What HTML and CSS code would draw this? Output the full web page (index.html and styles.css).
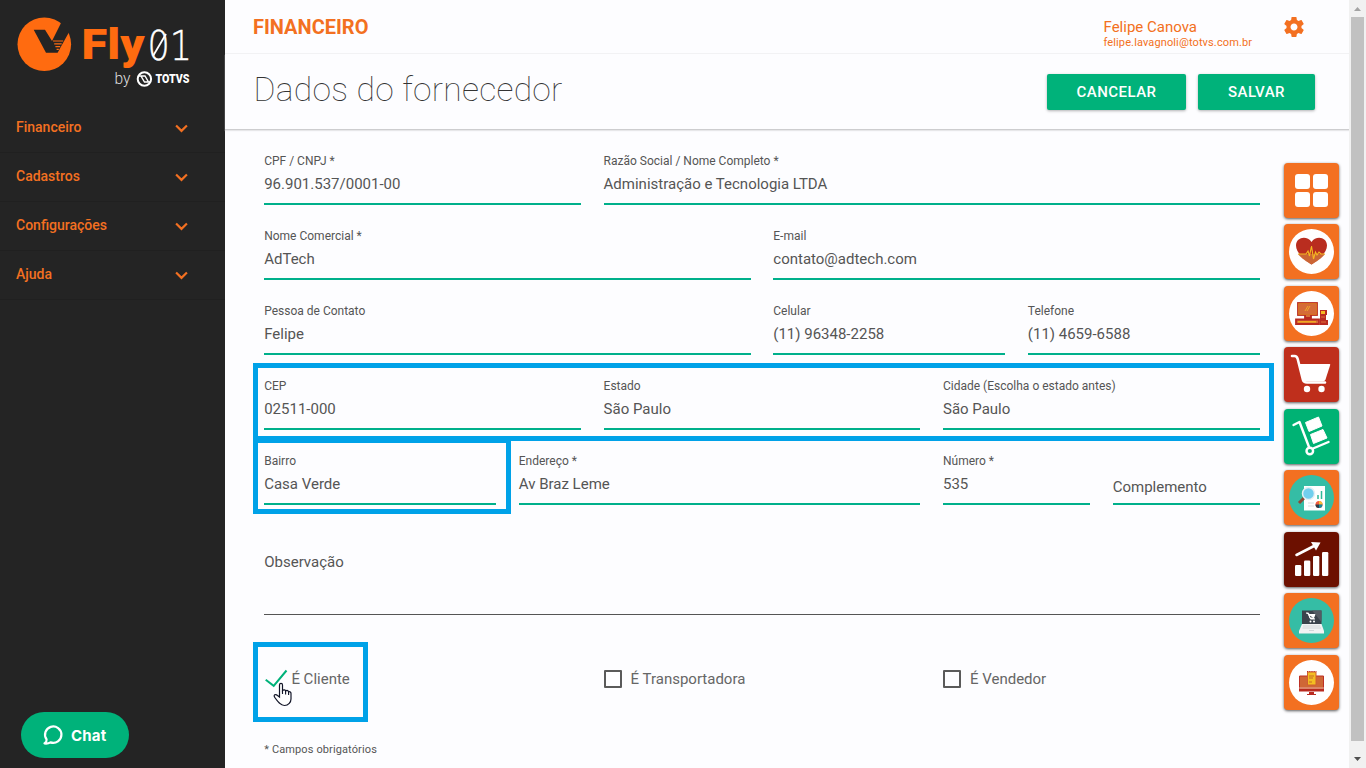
FILE: index.html
```html
<!DOCTYPE html>
<html lang="pt-BR">
<head>
<meta charset="utf-8">
<title>Fly01 - Financeiro</title>
<link rel="stylesheet" href="styles.css">
</head>
<body>
<div class="app">
  <aside class="sidebar">
    <svg class="logo" width="225" height="103" viewBox="0 0 225 103">
      <circle cx="44.3" cy="44.3" r="26.8" fill="#ff6b10"/>
      <path d="M33.700 29.700H45L52 41L63 19L73 25L57.600 52.800H46z" fill="#242424"/>
      <path d="M53 41H63.200M54.200 43.800H61.700M55.400 46.600H60.200M56.600 49.400H58.800" stroke="#ff6b10" stroke-width="1.200"/>
      <text class="logo-fly" x="81.500" y="59.300" textLength="63" lengthAdjust="spacingAndGlyphs">Fly</text>
      <text class="logo-num" x="147.500" y="59.500" textLength="44.500" lengthAdjust="spacingAndGlyphs">01</text>
      <path d="M153 56L166 34" stroke="#fff" stroke-width="1.800"/>
      <text class="logo-by" x="114.500" y="83.500" textLength="16" lengthAdjust="spacingAndGlyphs">by</text>
      <circle cx="144.400" cy="79" r="6.700" fill="none" stroke="#fff" stroke-width="2"/>
      <path d="M141 76H145L148.500 82H144.500zM138.500 76H141M148.500 82H150.500" fill="none" stroke="#fff" stroke-width="1.400"/>
      <text class="logo-totvs" x="155.500" y="83" textLength="34" lengthAdjust="spacingAndGlyphs">TOTVS</text>
    </svg>
    <nav class="menu">
      <a class="menu-item">Financeiro<svg class="chev" viewBox="0 0 12 8"><path d="M1 1.2L6 6.2L11 1.2"/></svg></a>
      <a class="menu-item">Cadastros<svg class="chev" viewBox="0 0 12 8"><path d="M1 1.2L6 6.2L11 1.2"/></svg></a>
      <a class="menu-item">Configurações<svg class="chev" viewBox="0 0 12 8"><path d="M1 1.2L6 6.2L11 1.2"/></svg></a>
      <a class="menu-item">Ajuda<svg class="chev" viewBox="0 0 12 8"><path d="M1 1.2L6 6.2L11 1.2"/></svg></a>
    </nav>
    <button class="chat"><svg width="22" height="22" viewBox="0 0 22 22"><path d="M4.600 15.500A8.200 8.200 0 1 1 8.500 18.400C6.500 19.600 4.500 19.800 2.500 19.500C4 18.400 4.800 17 4.600 15.500z" fill="none" stroke="#fff" stroke-width="2.200" stroke-linejoin="round"/></svg><span>Chat</span></button>
  </aside>

  <main class="main">
    <header class="topbar">
      <div class="module">FINANCEIRO</div>
      <div class="user"><div class="user-name">Felipe Canova</div><div class="user-mail">felipe.lavagnoli@totvs.com.br</div></div>
      <svg class="gear" width="24" height="24" viewBox="0 0 24 24"><path d="M19.430 12.980c.04-.32.070-.64.070-.98s-.03-.66-.07-.98l2.110-1.650c.19-.15.240-.42.120-.64l-2-3.460c-.12-.22-.39-.3-.61-.22l-2.490 1c-.52-.4-1.080-.73-1.690-.98l-.38-2.650C14.460 2.180 14.250 2 14 2h-4c-.25 0-.46.180-.49.420l-.38 2.650c-.61.250-1.170.590-1.690.980l-2.490-1c-.23-.09-.49 0-.61.220l-2 3.460c-.13.220-.07.490.120.640l2.110 1.650c-.04.320-.07.650-.07.980s.030.660.070.980l-2.110 1.650c-.19.150-.24.420-.12.640l2 3.460c.12.220.390.300.610.220l2.490-1c.52.400 1.080.730 1.690.980l.38 2.650c.03.240.240.420.490.420h4c.25 0 .46-.18.490-.42l.38-2.650c.61-.25 1.170-.59 1.690-.98l2.490 1c.23.090.490 0 .61-.22l2-3.460c.12-.22.070-.49-.12-.64l-2.110-1.650zM12 15.500c-1.930 0-3.500-1.570-3.500-3.500s1.570-3.500 3.500-3.500 3.500 1.570 3.500 3.500-1.570 3.500-3.500 3.500z" fill="#f37021"/></svg>
    </header>
    <div class="titlebar">
      <h1 class="title">Dados do fornecedor</h1>
      <button class="btn btn-cancel">CANCELAR</button>
      <button class="btn btn-save">SALVAR</button>
    </div>

    <div class="content">
      <form class="form">
        <div class="field s4"><label>CPF / CNPJ *</label><div class="value">96.901.537/0001-00</div></div>
        <div class="field s8"><label>Razão Social / Nome Completo *</label><div class="value">Administração e Tecnologia LTDA</div></div>
        <div class="field s6"><label>Nome Comercial *</label><div class="value">AdTech</div></div>
        <div class="field s6"><label>E-mail</label><div class="value">contato@adtech.com</div></div>
        <div class="field s6"><label>Pessoa de Contato</label><div class="value">Felipe</div></div>
        <div class="field s3"><label>Celular</label><div class="value">(11) 96348-2258</div></div>
        <div class="field s3"><label>Telefone</label><div class="value">(11) 4659-6588</div></div>
        <div class="field s4"><label>CEP</label><div class="value">02511-000</div></div>
        <div class="field s4"><label>Estado</label><div class="value">São Paulo</div></div>
        <div class="field s4"><label>Cidade (Escolha o estado antes)</label><div class="value">São Paulo</div></div>
        <div class="field s3"><label>Bairro</label><div class="value">Casa Verde</div></div>
        <div class="field s5"><label>Endereço *</label><div class="value">Av Braz Leme</div></div>
        <div class="field s2"><label>Número *</label><div class="value">535</div></div>
        <div class="field s2 empty"><div class="value">Complemento</div></div>
        <div class="field s12 notes"><div class="value">Observação</div></div>
        <div class="check s4 checked"><svg width="24" height="20" viewBox="0 0 24 20"><path d="M1.700 10.800L9.700 16.800L22.500 1.500" fill="none" stroke="#00b27a" stroke-width="2"/></svg>É Cliente</div>
        <div class="check s4"><i class="box"></i>É Transportadora</div>
        <div class="check s4"><i class="box"></i>É Vendedor</div>
        <div class="required">* Campos obrigatórios</div>
      </form>

      <div class="apps">
        <div class="app-tile"><svg viewBox="0 0 55 55"><g fill="#fff"><rect x="11" y="11" width="15" height="15" rx="3"/><rect x="29" y="11" width="15" height="15" rx="3"/><rect x="11" y="29" width="15" height="15" rx="3"/><rect x="29" y="29" width="15" height="15" rx="3"/></g></svg></div>
        <div class="app-tile"><svg viewBox="0 0 55 55"><circle cx="27.500" cy="27.500" r="22.500" fill="#fff"/><path d="M27.500 40.500C21 36 12 29 12 21.500C12 13 23 11 27.500 18C32 11 43 13 43 21.500C43 29 34 36 27.500 40.500z" fill="#b92d1f"/><path d="M14 30H41C38 34 32 38 27.500 40.500C23 38 17 34 14 30z" fill="#cb6535"/><path d="M14 30H22L24 27L25.500 32L27.500 22L29.500 35L31.500 28L33 31L35 28L37 30H41" fill="none" stroke="#f5b921" stroke-width="1.100"/></svg></div>
        <div class="app-tile"><svg viewBox="0 0 55 55"><circle cx="27.500" cy="27.500" r="22.500" fill="#fff"/><g fill="#d56b38" stroke="#b82a20" stroke-width="1.800"><rect x="14" y="17" width="19" height="12"/><path d="M21 29V32H27V29M12 33.500H35V38H12z"/></g><path d="M14 35.800H32" stroke="#f2b21f" stroke-width="1.400"/><path d="M14.500 17.500H32.500V28.500H14.500z" fill="none" stroke="#f2b21f" stroke-width=".5"/><path d="M21 25L24 20M23 25L26 20" stroke="#efa82a" stroke-width="1"/><path d="M36 24H43V29H42V34H44V39H36z" fill="#b92b20"/><path d="M37 25H41V28H37z" fill="#f5b921"/><path d="M37 31H41M37 36H42" stroke="#df713a" stroke-width="1"/></svg></div>
        <div class="app-tile red"><svg viewBox="0 0 55 55"><path d="M8 9H10.500C12.500 9 13.200 10 13.700 12L19 33C19.500 35 21 35.500 23 35.500H41" fill="none" stroke="#fff" stroke-width="2.600" stroke-linecap="round"/><path d="M15 17H45.500Q46.500 17 46.200 18L41.500 32.500Q40.800 34.500 38.500 34.500H21Q19 34.500 18.600 33z" fill="#fff"/><circle cx="23" cy="42" r="3.200" fill="#fff"/><circle cx="37.500" cy="42" r="3.200" fill="#fff"/></svg></div>
        <div class="app-tile green"><svg viewBox="0 0 55 55"><path d="M9.500 16L15.500 13L25 38M29 39.500L44.500 33" fill="none" stroke="#fff" stroke-width="2.400" stroke-linecap="round" stroke-linejoin="round"/><circle cx="25.800" cy="42" r="3.300" fill="none" stroke="#fff" stroke-width="2.400"/><path d="M21.500 13.500L34.500 8L38 17L25 22.500zM26.500 25.500L39 20.500L43 29L29.500 34.500z" fill="#fff" stroke="#fff" stroke-linejoin="round"/></svg></div>
        <div class="app-tile"><svg viewBox="0 0 55 55"><circle cx="27.500" cy="27.500" r="22.500" fill="#35bda5"/><path d="M20 16H41V40.500H20z" fill="#fff"/><path d="M34 29V25M37.500 29V21" stroke="#31b998" stroke-width="1.500"/><path d="M24 33H30M24 36H30" stroke="#d9dde0"/><circle cx="35" cy="34.500" r="3.500" fill="#f25a3d"/><path d="M35 34.500V31A3.500 3.500 0 0 1 38.500 34.500z" fill="#f7bd35"/><path d="M35 34.500H38.500A3.500 3.500 0 0 1 35 38z" fill="#168a9e"/><path d="M35 34.500V38A3.500 3.500 0 0 1 31.500 34.500z" fill="#293e4c"/><path d="M15 33L20 28" stroke="#8d4936" stroke-width="3"/><circle cx="24.500" cy="23.500" r="6" fill="#72cfee" stroke="#e5f0f4" stroke-width="1.500"/></svg></div>
        <div class="app-tile dark"><svg viewBox="0 0 55 55"><g fill="#fff"><rect x="11" y="33" width="6.300" height="11" rx="1.200"/><rect x="20" y="28.500" width="6.300" height="15.500" rx="1.200"/><rect x="29" y="24" width="6.300" height="20" rx="1.200"/><rect x="38" y="20" width="6.300" height="24" rx="1.200"/><path d="M27 10L36.500 10.500L32 18.500z"/></g><path d="M12.500 23L31 13.500" stroke="#fff" stroke-width="2.600" stroke-linecap="round"/></svg></div>
        <div class="app-tile"><svg viewBox="0 0 55 55"><circle cx="27.500" cy="27.500" r="22.500" fill="#35bda5"/><path d="M18 17.500H37.500V31H18z" fill="#3b434c"/><path d="M28 17.500H37.500V29z" fill="#545b63"/><path d="M22 20H24.500L26.500 26H31M24.500 21.500H31L29.500 25H26z" fill="#fff" stroke="#fff" stroke-width="1"/><circle cx="26.500" cy="28.500" r="1" fill="#fff"/><circle cx="30" cy="28.500" r="1" fill="#fff"/><path d="M18 31H37.500L40 38V40.500H15V38z" fill="#f1f2f3"/><path d="M19 33H36M18.500 35H37M25 37.500H30" stroke="#d3d6d9" stroke-width="1"/></svg></div>
        <div class="app-tile"><svg viewBox="0 0 55 55"><circle cx="27.500" cy="27.500" r="22.500" fill="#fff"/><path d="M15.500 21H39.500V35H15.500z" fill="#cf6736" stroke="#bd3024"/><path d="M15 34H40V36.500H15z" fill="#b92a20"/><path d="M15 33H40" stroke="#e6a69b"/><path d="M25 37H30V39H32V40H23V39H25z" fill="#b92a20"/><path d="M23.500 17H32V30H23.500z" fill="#f3be22" stroke="#cf5e30"/><path d="M23 16.500H32.500" stroke="#ba3326" stroke-dasharray="1.200 1"/><path d="M25 21H30M25 23H29M25 27H28" stroke="#c76b26"/></svg></div>
      </div>
    </div>
  </main>

  <div class="scrollbar">
    <svg width="17" height="17" viewBox="0 0 17 17"><path d="M5 11L8.500 7L12 11z" fill="#a3a3a3"/></svg>
    <div class="thumb"></div>
    <svg width="17" height="17" viewBox="0 0 17 17"><path d="M5 6L8.500 10L12 6z" fill="#505050"/></svg>
  </div>
</div>

<div class="mark mark-address"></div>
<div class="mark mark-district"></div>
<div class="mark mark-client"></div>
<svg class="pointer" width="19" height="25" viewBox="0 0 19 25"><path d="M6.500 15V3C6.500.8 9.500.8 9.500 3V8.500C10.500 7.300 12.500 7.700 12.600 9C14 8 15.500 8.500 15.600 10C17 9.200 18 10.200 18 11.500V17C18 20 15.500 23.500 11.500 23.500C7.500 23.500 5 20 1.800 15.500C0 13 2.500 11.500 4.500 13.500z" fill="#fff" stroke="#111427" stroke-width="1.200"/><path d="M9.500 8.500V12M12.600 9V12.500M15.600 10V13" stroke="#111427" stroke-width="1.100"/></svg>
</body>
</html>
```
FILE: styles.css
```css
* { box-sizing: border-box; }
body { margin: 0; font-family: Roboto, "Liberation Sans", sans-serif; color: #555; background: #fdfdff; overflow: hidden; }
button { border: 0; font-family: inherit; }
.app { display: flex; width: 1366px; height: 768px; }

.sidebar { width: 225px; background: #242424; display: flex; flex-direction: column; align-items: flex-start; }
.logo { display: block; }
.logo-fly { font: 900 42px Roboto, sans-serif; fill: #ff6b10; }
.logo-num { font: 200 40px "DejaVu Sans", "DejaVu Sans Light", sans-serif; fill: #fff; stroke: #fff; stroke-width: .4px; }
.logo-by { font: 300 17px Roboto, sans-serif; fill: #ddd; }
.logo-totvs { font: 900 12px Roboto, sans-serif; fill: #fff; }
.menu { width: 225px; }
.menu-item { height: 49px; padding: 0 37px 1px 16px; display: flex; align-items: center; justify-content: space-between; box-shadow: 0 1px 0 #202020; color: #f37021; font-size: 14px; font-weight: 500; line-height: 16px; }
.chev { width: 13px; height: 9px; margin: 2px .5px 0 0; fill: none; stroke: #f37021; stroke-width: 2; }
.chat { margin: auto 0 10px 21px; width: 108px; height: 46px; border-radius: 23px; background: #00b27a; color: #fff; display: flex; align-items: center; justify-content: flex-start; gap: 7px; font: 700 15px Inter, sans-serif; letter-spacing: .2px; padding: 0 0 0 21px; }

.main { width: 1124px; display: flex; flex-direction: column; }
.topbar { height: 54px; border-bottom: 1px solid #f2f2f4; display: flex; align-items: flex-start; color: #f37021; padding-left: 28px; }
.module { width: 850px; font-size: 20px; font-weight: 700; line-height: 55px; height: 53px; }
.user { width: 179px; padding: 18px 0 0 .5px; }
.user-name { font-size: 15px; line-height: 18px; }
.user-mail { font-size: 11px; line-height: 13px; letter-spacing: .12px; }
.gear { margin-top: 15px; }
.titlebar { height: 76px; border-bottom: 1px solid #cdcdcf; box-shadow: 0 1px 1px #e7e7e9; display: flex; align-items: flex-start; padding: 20px 34px 0 28.6px; }
.title { margin: -6px auto 0 0; font-size: 33.6px; font-weight: 100; line-height: 44px; color: #333; letter-spacing: .27px; }
.btn { height: 36px; border-radius: 2px; background: #00b27a; color: #fff; font-size: 15px; font-weight: 500; letter-spacing: .45px; padding: 0; box-shadow: 0 1px 3px rgba(0,0,0,.3); }
.btn-cancel { width: 139px; margin-right: 12px; }
.btn-save { width: 117px; }

.content { display: flex; align-items: flex-start; }
.form { margin-left: 39.2px; width: 995.7px; display: grid; grid-template-columns: repeat(12, minmax(0, 1fr)); column-gap: 22.5px; grid-template-rows: repeat(5, 75px) 110px 128px; }
.s2 { grid-column: span 2; }
.s3 { grid-column: span 3; }
.s4 { grid-column: span 4; }
.s5 { grid-column: span 5; }
.s6 { grid-column: span 6; }
.s8 { grid-column: span 8; }
.s12 { grid-column: span 12; }
.field { padding-top: 23px; border-bottom: 2px solid #00b08b; white-space: nowrap; }
.field label { display: block; font-size: 12px; line-height: 16px; }
.value { margin-top: 4px; font-size: 15px; line-height: 22px; }
.empty .value { margin-top: 23px; }
.notes { border-bottom: 1px solid #555; }
.notes .value { margin-top: 23px; }
.check { display: flex; align-items: center; font-size: 15px; color: #666; }
.checked svg { margin: 0 3px 0 .2px; }
.box { width: 18px; height: 18px; border: 2px solid #5a5a5a; margin-right: 9px; border-radius: 1px; }
.required { grid-column: span 12; font-size: 11px; line-height: 14px; letter-spacing: .12px; }

.apps { margin: 33px 0 0 24.1px; display: flex; flex-direction: column; gap: 6.45px; }
.app-tile { width: 55px; height: 55px; border-radius: 4px; background: #f37021; box-shadow: 0 1px 3px rgba(0,0,0,.65); }
.app-tile svg { display: block; width: 55px; height: 55px; }
.red { background: #bf2f1c; }
.green { background: #00b274; }
.dark { background: #6c1000; }

.scrollbar { width: 17px; background: #f1f1f1; display: flex; flex-direction: column; }
.thumb { height: 724px; width: 13px; margin-left: 2px; background: #c1c1c1; }
.thumb + svg { margin-top: 10px; }

.mark { position: absolute; border: 5px solid #00a2e8; }
.mark-address { left: 253px; top: 363px; width: 1021px; height: 78px; }
.mark-district { left: 253px; top: 438px; width: 258px; height: 76px; }
.mark-client { left: 253px; top: 642px; width: 115px; height: 80px; }
.pointer { position: absolute; left: 273px; top: 682px; }
```
